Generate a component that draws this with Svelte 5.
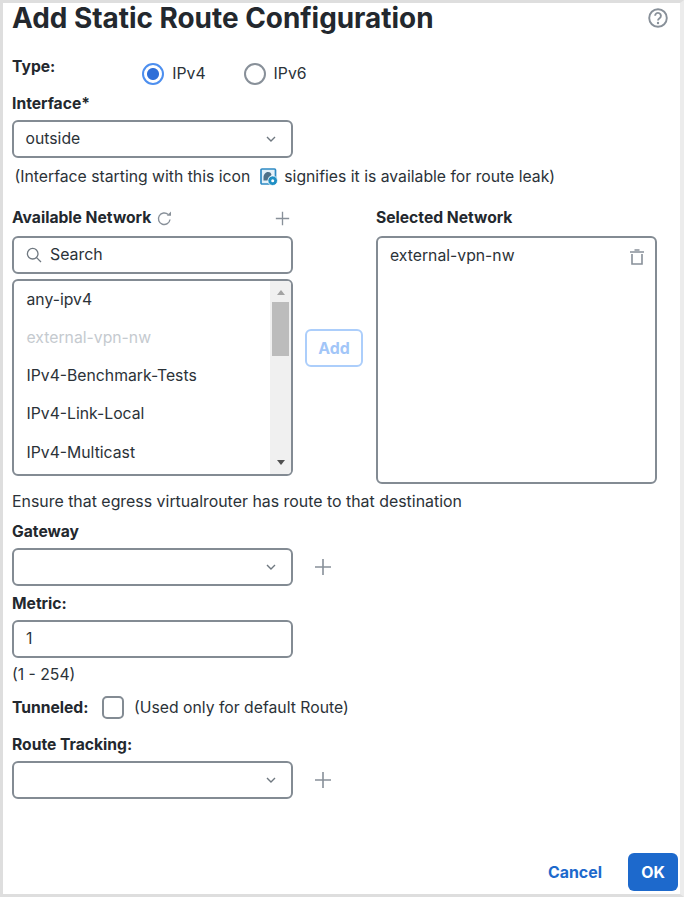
<script>
	const networks = ['any-ipv4', 'external-vpn-nw', 'IPv4-Benchmark-Tests', 'IPv4-Link-Local', 'IPv4-Multicast'];
	const taken = ['external-vpn-nw'];
</script>

{#snippet chevron()}
	<svg class="chevron" width="12" height="8" viewBox="0 0 12 8"><path d="M2 2l4 4 4-4" fill="none" stroke="#6f7880" stroke-width="1.4"/></svg>
{/snippet}

{#snippet plus(size)}
	<svg width={size} height={size} viewBox="0 0 18 18"><path d="M9 1v16M1 9h16" stroke="#889099" stroke-width="1.6"/></svg>
{/snippet}

{#snippet dropdown(text)}
	<div class="field select">
		<span>{text}</span>
		{@render chevron()}
	</div>
{/snippet}

<div class="dialog">
	<header>
		<h1>Add Static Route Configuration</h1>
		<svg class="help" width="20" height="20" viewBox="0 0 20 20">
			<circle cx="10" cy="10" r="8.8" fill="none" stroke="#889099" stroke-width="1.9"/>
			<path d="M7.1 7.8a2.9 2.9 0 1 1 4.5 2.4c-1 .7-1.6 1.1-1.6 2.2" fill="none" stroke="#889099" stroke-width="1.9"/>
			<circle cx="10" cy="15" r="1.2" fill="#889099"/>
		</svg>
	</header>

	<div class="type-row">
		<span class="label">Type:</span>
		<div class="radios">
			<span class="radio-item"><span class="radio on"></span>IPv4</span>
			<span class="radio-item"><span class="radio"></span>IPv6</span>
		</div>
	</div>

	<div class="label interface">Interface*</div>
	{@render dropdown('outside')}

	<p class="leak-note">
		<span>(Interface starting with this icon</span>
		<svg class="leak" width="18" height="18" viewBox="0 0 18 18">
			<rect x="1" y="1" width="14.5" height="15" rx="1" fill="#e3f1f9" stroke="#2f8ac4" stroke-width="1.7"/>
			<path d="M3.5 9.5c0-3 2-5.500 4.500-5.500s3 1 3.500 3l-3 2.500v3h-5z" fill="#4f7188"/>
			<circle cx="12.700" cy="12.700" r="4.800" fill="#1f8fc4" stroke="#fff" stroke-width=".8"/>
			<circle cx="12.700" cy="12.700" r="1.500" fill="#fff"/>
		</svg>
		<span>signifies it is available for route leak)</span>
	</p>

	<div class="picker">
		<div class="available">
			<div class="picker-head">
				<span class="label">Available Network</span>
				<svg class="refresh" width="17" height="17" viewBox="0 0 17 17">
					<path d="M14 9.500a5.800 5.800 0 1 1-1.800-5" fill="none" stroke="#889099" stroke-width="1.400"/>
					<path d="M15 1.500v4.200h-4.200z" fill="#889099"/>
				</svg>
				<span class="head-plus">{@render plus(15)}</span>
			</div>
			<div class="field search">
				<svg width="16" height="16" viewBox="0 0 16 16">
					<circle cx="6.700" cy="6.700" r="5.300" fill="none" stroke="#6f7880" stroke-width="1.300"/>
					<path d="M10.600 10.600l4.400 4.400" stroke="#6f7880" stroke-width="1.300"/>
				</svg>
				<span>Search</span>
			</div>
			<div class="list">
				<ul>
					{#each networks as network}
						<li class:taken={taken.includes(network)}>{network}</li>
					{/each}
				</ul>
				<div class="scrollbar">
					<span class="arrow up"></span>
					<span class="thumb"></span>
					<span class="arrow down"></span>
				</div>
			</div>
		</div>

		<button class="add">Add</button>

		<div class="selected">
			<div class="picker-head"><span class="label">Selected Network</span></div>
			<div class="selected-box">
				<span>external-vpn-nw</span>
				<svg width="14" height="16" viewBox="0 0 14 16">
					<path d="M0 3h14M4.500 1h5" stroke="#889099" stroke-width="1.400"/>
					<path d="M2 5v10h10V5" fill="none" stroke="#889099" stroke-width="1.600"/>
				</svg>
			</div>
		</div>
	</div>

	<p class="egress">Ensure that egress virtualrouter has route to that destination</p>

	<div class="label gateway">Gateway</div>
	<div class="with-plus">
		{@render dropdown('')}
		{@render plus(18)}
	</div>

	<div class="label metric">Metric:</div>
	<div class="field">1</div>
	<p class="range">(1 - 254)</p>

	<div class="tunneled">
		<span class="label">Tunneled:</span>
		<span class="checkbox"></span>
		<span>(Used only for default Route)</span>
	</div>

	<div class="label tracking">Route Tracking:</div>
	<div class="with-plus">
		{@render dropdown('')}
		{@render plus(18)}
	</div>

	<footer>
		<button class="cancel">Cancel</button>
		<button class="ok">OK</button>
	</footer>
</div>

<style>
	:global(body) {
		margin: 0;
		background: #fff;
	}

	.dialog {
		box-sizing: border-box;
		width: 684px;
		height: 897px;
		padding: 0 2px 3px 9px;
		border: 3px solid #dedede;
		border-right: 4px solid #ececec;
		font-family: Inter, "Liberation Sans", sans-serif;
		font-size: 15.75px;
		line-height: 20px;
		color: #2b3238;
		display: flex;
		flex-direction: column;
		overflow: hidden;
	}

	header {
		display: flex;
		justify-content: space-between;
		align-items: center;
		height: 30px;
		padding-right: 10px;
	}

	h1 {
		margin: 0;
		font-size: 27.9px;
		font-weight: 700;
		line-height: 30px;
		color: #23282e;
	}

	.label {
		font-weight: 700;
		font-size: 15.65px;
		line-height: 20px;
		color: #23282e;
	}

	.type-row {
		display: flex;
		height: 34px;
		margin-top: 21px;
	}

	.type-row .label {
		margin-top: 3px;
	}

	.radios {
		display: flex;
		gap: 38px;
		margin-left: 87px;
		padding-top: 9px;
	}

	.radio-item {
		display: flex;
		align-items: center;
		gap: 8px;
		height: 22px;
	}

	.radio {
		box-sizing: border-box;
		width: 22px;
		height: 22px;
		border: 2px solid #889099;
		border-radius: 50%;
	}

	.radio.on {
		border-color: #4d8fef;
		background: radial-gradient(circle, #2f6fd8 0 5.5px, #fff 6.5px);
	}

	.interface {
		margin-top: 6px;
		height: 19px;
		margin-bottom: 7px;
	}

	.field {
		box-sizing: border-box;
		width: 281px;
		height: 38px;
		padding: 0 12px;
		border: 2px solid #838b93;
		border-radius: 6px;
		display: flex;
		align-items: center;
		flex: none;
	}

	.select {
		justify-content: space-between;
		padding-left: 11.5px;
	}

	.chevron {
		margin-right: 2px;
	}

	.leak-note {
		margin: 9px 0 0 2.5px;
		height: 20px;
		display: flex;
		align-items: center;
		white-space: nowrap;
	}

	.leak {
		margin: 0 6px 0 10px;
	}

	.picker {
		display: flex;
		margin-top: 20px;
	}

	.picker-head {
		display: flex;
		align-items: center;
		height: 20px;
		margin-bottom: 9px;
	}

	.picker-head .label {
		padding-top: 2px;
	}

	.available {
		width: 281px;
	}

	.refresh {
		margin-left: 5px;
		margin-top: 2px;
	}

	.head-plus {
		display: flex;
		margin-left: auto;
		margin-right: 3px;
		margin-top: 3px;
	}

	.search {
		gap: 8px;
	}

	.search span {
		font-size: 15.9px;
	}

	.list {
		box-sizing: border-box;
		display: flex;
		height: 197px;
		margin-top: 5px;
		border: 2px solid #838b93;
		border-radius: 6px;
		overflow: hidden;
	}

	ul {
		flex: 1;
		list-style: none;
		margin: 0;
		padding: 9px 12.5px 0;
	}

	li {
		height: 38.15px;
		line-height: 20px;
	}

	li.taken {
		color: #c5cacf;
	}

	.scrollbar {
		width: 21px;
		background: #f0f0f0;
		display: flex;
		flex-direction: column;
		align-items: center;
		position: relative;
	}

	.thumb {
		width: 17px;
		height: 54px;
		margin-top: 21px;
		background: #bcbcbc;
	}

	.arrow {
		position: absolute;
		border-left: 4.5px solid transparent;
		border-right: 4.5px solid transparent;
	}

	.arrow.up {
		top: 9px;
		border-bottom: 5px solid #a3a3a3;
	}

	.arrow.down {
		bottom: 9px;
		border-top: 5px solid #505050;
	}

	button {
		font-family: inherit;
		font-weight: 700;
		font-size: 15.9px;
		border-radius: 6px;
		padding: 0;
		border: none;
		background: none;
	}

	.add {
		width: 58px;
		height: 38px;
		margin: 122px 13px 0 12px;
		border: 2px solid #acceFB;
		color: #a2c6f8;
		background: #fff;
	}

	.selected {
		width: 281px;
	}

	.selected-box {
		box-sizing: border-box;
		height: 248px;
		padding: 8px 12px;
		border: 2px solid #838b93;
		border-radius: 6px;
		display: flex;
		justify-content: space-between;
		align-items: flex-start;
	}

	.selected-box svg {
		margin-top: 3px;
		margin-right: -1px;
	}

	.egress {
		margin: 8px 0 0;
		height: 19px;
		font-size: 15.9px;
	}

	.gateway {
		margin-top: 11px;
		height: 19px;
		margin-bottom: 7px;
	}

	.with-plus {
		display: flex;
		align-items: center;
		gap: 21px;
	}

	.metric {
		margin-top: 8px;
		height: 19px;
		margin-bottom: 7px;
	}

	.range {
		margin: 7px 0 0;
		height: 19px;
	}

	.tunneled {
		display: flex;
		align-items: center;
		height: 24px;
		margin-top: 11px;
	}

	.tunneled .label {
		padding-top: 2px;
	}

	.tunneled > span:last-child {
		padding-top: 2px;
	}

	.checkbox {
		box-sizing: border-box;
		width: 22px;
		height: 23px;
		margin: 0 9.5px 0 14px;
		border: 2px solid #838b93;
		border-radius: 5px;
	}

	.tracking {
		margin-top: 16px;
		height: 19px;
		margin-bottom: 7px;
	}

	footer {
		margin-top: auto;
		display: flex;
		justify-content: flex-end;
		align-items: center;
		gap: 26px;
	}

	.cancel {
		color: #1d69cc;
	}

	.ok {
		width: 50px;
		height: 38px;
		background: #1d69cc;
		color: #fff;
	}
</style>
